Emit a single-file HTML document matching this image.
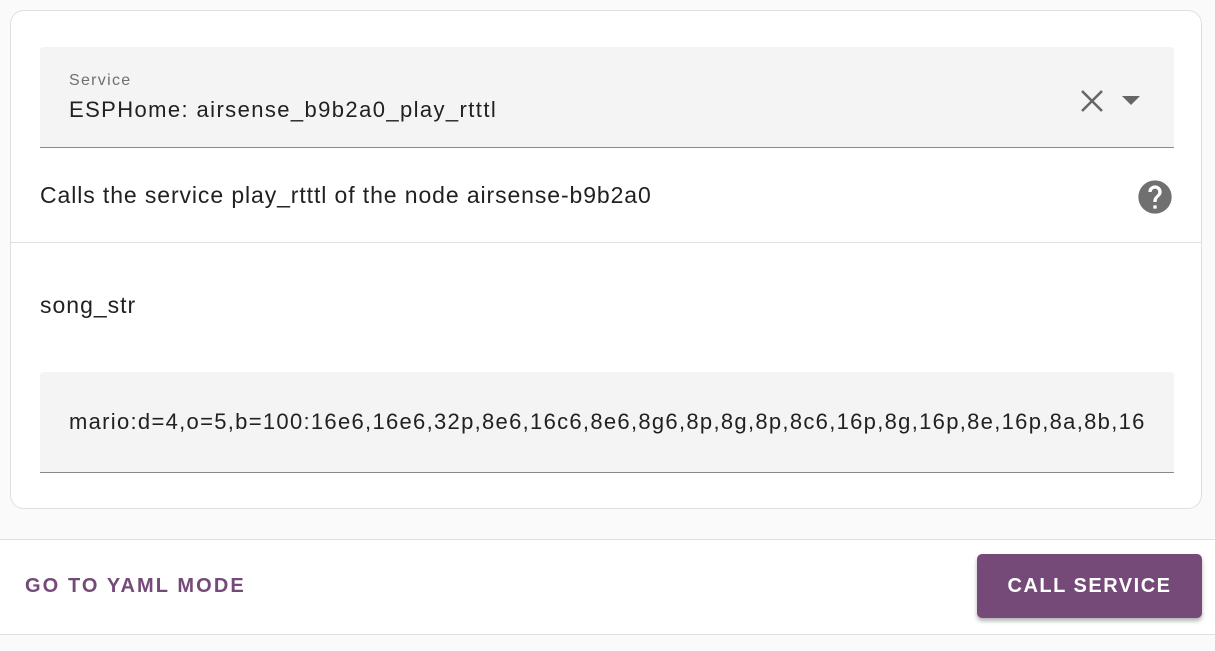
<!DOCTYPE html>
<html><head><style>
body{margin:0;width:1215px;height:651px;background:#fafafa;font-family:"Liberation Sans",sans-serif;position:relative;overflow:hidden;color:#212121}
.card{position:absolute;left:10px;top:10px;width:1190px;height:497px;background:#fff;border:1px solid #e0e0e0;border-radius:14px}
.field{position:absolute;left:29px;width:1134px;height:100px;background:#f4f4f4;border-bottom:1px solid #8a8a8a;border-radius:4px 4px 0 0}
.abs{position:absolute;white-space:nowrap}
</style></head><body>
<div class="card">
 <div class="field" style="top:36px">
  <div class="abs" style="left:29px;top:25px;font-size:16px;letter-spacing:1.3px;color:#6f6f6f">Service</div>
  <div class="abs" style="left:29px;top:50px;font-size:22px;letter-spacing:1.4px">ESPHome: airsense_b9b2a0_play_rtttl</div>
 </div>
 <svg class="abs" style="left:0;top:0" width="1190" height="200"><path d="M1071 80L1091 100M1091 80L1071 100" stroke="#666" stroke-width="2.6"/><path d="M1111 85H1129L1120 94Z" fill="#666"/></svg>
 <div class="abs" style="left:29px;top:171px;font-size:23px;letter-spacing:0.9px">Calls the service play_rtttl of the node airsense-b9b2a0</div>
 <svg class="abs" style="left:1124px;top:166px" width="40" height="40" viewBox="0 0 24 24"><path d="M12 2a10 10 0 1 0 0 20 10 10 0 0 0 0-20zm1 17h-2v-2h2v2zm2.07-7.75l-.9.92C13.45 12.9 13 13.5 13 15h-2v-.5c0-1.1.45-2.1 1.17-2.83l1.24-1.26A2 2 0 0 0 14 9a2 2 0 0 0-4 0H8a4 4 0 0 1 8 0c0 .88-.36 1.68-.93 2.25z" fill="#707070"/></svg>
 <div class="abs" style="left:0;top:231px;width:1190px;height:1px;background:#e0e0e0"></div>
 <div class="abs" style="left:29px;top:281px;font-size:23px;letter-spacing:1px">song_str</div>
 <div class="field" style="top:361px;overflow:hidden">
  <div class="abs" style="left:29px;top:37px;font-size:22px;letter-spacing:1.3px;width:1076px;overflow:hidden">mario:d=4,o=5,b=100:16e6,16e6,32p,8e6,16c6,8e6,8g6,8p,8g,8p,8c6,16p,8g,16p,8e,16p,8a,8b,16p,8a,8b</div>
 </div>
</div>
<div class="abs" style="left:0;top:539px;width:1215px;height:94px;background:#fff;border-top:1px solid #e0e0e0;border-bottom:1px solid #e0e0e0"></div>
<div class="abs" style="left:25px;top:575px;font-size:20px;letter-spacing:2.1px;color:#764a78;font-weight:bold">GO TO YAML MODE</div>
<div class="abs" style="left:977px;top:554px;width:225px;height:64px;background:#764a78;border-radius:5px;box-shadow:0 3px 4px rgba(0,0,0,.3);color:#fff;font-size:20px;font-weight:bold;letter-spacing:1.5px;text-align:center;line-height:64px">CALL SERVICE</div>
</body></html>
